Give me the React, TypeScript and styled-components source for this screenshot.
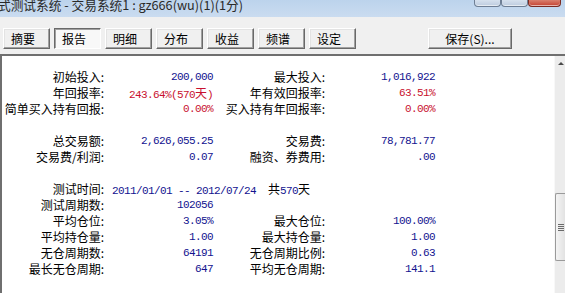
import React from 'react';
import styled, { createGlobalStyle } from 'styled-components';

const GlobalStyle = createGlobalStyle`
  html, body {
    margin: 0;
    padding: 0;
    background: #f0f0f0;
    overflow: hidden;
  }
`;

const Window = styled.div`
  width: 565px;
  height: 293px;
  display: flex;
  flex-direction: column;
  overflow: hidden;
  background: #f0f0f0;
  font-family: "Noto Sans CJK SC", "Liberation Sans", sans-serif;
`;

const TitleBar = styled.div`
  height: 17px;
  flex: none;
  display: flex;
  background: linear-gradient(#bcd3ec, #cadcf0);
  overflow: hidden;
`;

const TitleText = styled.div`
  margin: -1px 0 0 -2px;
  font-size: 12.7px;
  line-height: 12px;
  color: #2a2a2a;
  white-space: nowrap;
`;

const WinButtons = styled.div`
  margin-left: auto;
  margin-right: 4px;
  display: flex;
  align-self: flex-start;
`;

const WinButton = styled.div<{ $close?: boolean }>`
  width: ${(p) => (p.$close ? 33 : 27)}px;
  height: 7px;
  box-sizing: border-box;
  border: 1px solid ${(p) => (p.$close ? '#7a2a22' : '#6e7e94')};
  border-top: none;
  border-radius: 0 0 4px 4px;
  background: ${(p) =>
    p.$close ? 'linear-gradient(#d9806f, #c4402f)' : 'linear-gradient(#d6e1ee, #bccbde)'};
  box-shadow: inset 0 -1px rgba(255, 255, 255, 0.6);
`;

const Toolbar = styled.div`
  height: 37px;
  flex: none;
  box-sizing: border-box;
  padding: 11px 0 0 3px;
  display: flex;
  gap: 4px;
  align-items: flex-start;
`;

const ToolButton = styled.div<{ $pressed?: boolean; $wide?: boolean }>`
  width: ${(p) => (p.$wide ? 84 : 47)}px;
  height: 21px;
  box-sizing: border-box;
  font-size: 12px;
  line-height: 19px;
  color: #000;
  padding-left: ${(p) => (p.$wide ? 0 : 7)}px;
  text-align: ${(p) => (p.$wide ? 'center' : 'left')};
  white-space: nowrap;
  border: 1px solid;
  border-color: ${(p) => (p.$pressed ? '#696969 #ffffff #ffffff #696969' : '#ffffff #696969 #696969 #ffffff')};
  box-shadow: ${(p) =>
    p.$pressed ? 'inset 1px 1px #a0a0a0' : 'inset -1px -1px #a0a0a0, inset 1px 1px #e3e3e3'};
  background: ${(p) => (p.$pressed ? '#f8f8f8' : '#f0f0f0')};
  margin-left: ${(p) => (p.$wide ? 68 : 0)}px;
`;

const Panel = styled.div`
  flex: 1;
  display: flex;
  border-top: 2px solid #6f6f6f;
  border-left: 2px solid #6f6f6f;
  background: #fff;
  min-height: 0;
`;

const Content = styled.div`
  flex: 1;
  padding-top: 13px;
`;

const Report = styled.div`
  display: grid;
  grid-template-columns: 102px 109px 112px 110px;
  grid-auto-rows: 16px;
`;

const Label = styled.div`
  text-align: right;
  font-size: 12px;
  line-height: 16px;
  color: #000;
  white-space: nowrap;
`;

const Value = styled.div<{ $tone?: 'blue' | 'red' }>`
  text-align: right;
  font-family: "Liberation Mono", "Noto Sans CJK SC", monospace;
  font-size: 11px;
  letter-spacing: -0.6px;
  line-height: 16px;
  white-space: pre;
  color: ${(p) => (p.$tone === 'red' ? '#c8102e' : '#12128f')};
`;

const Cjk = styled.span<{ $black?: boolean }>`
  font-family: "Noto Sans CJK SC", sans-serif;
  font-size: 12px;
  letter-spacing: 0;
  color: ${(p) => (p.$black ? '#000' : 'inherit')};
`;

const WideValue = styled(Value)`
  grid-column: 2 / 5;
  text-align: left;
  padding-left: 8px;
`;

const Spacer = styled.div<{ $from?: number }>`
  grid-column: ${(p) => p.$from ?? 1} / 5;
`;

const Scrollbar = styled.div`
  width: 10px;
  flex: none;
  background: #ececec;
  border-left: 1px solid #f8f8f8;
  display: flex;
  flex-direction: column;
  align-items: center;
`;

const Arrow = styled.div`
  margin: 6px 0 0 2px;
  width: 0;
  height: 0;
  border-left: 3px solid transparent;
  border-right: 3px solid transparent;
  border-bottom: 3px solid #4a4a4a;
`;

const Thumb = styled.div`
  margin-top: 128px;
  align-self: stretch;
  height: 68px;
  box-sizing: border-box;
  border: 1px solid #9a9a9a;
  border-right: none;
  border-radius: 2px 0 0 2px;
  background: linear-gradient(90deg, #f4f4f4, #e2e2e2);
  display: flex;
  flex-direction: column;
  justify-content: center;
  gap: 1px;
  padding-left: 2px;
`;

const Grip = styled.div`
  width: 6px;
  height: 1px;
  background: #6a6a6a;
`;

type Tone = 'blue' | 'red';
type Pair = [string, React.ReactNode, Tone];

const rows: ([Pair, Pair] | null)[] = [
  [['初始投入', '200,000', 'blue'], ['最大投入', '1,016,922', 'blue']],
  [['年回报率', <>243.64%(570<Cjk>天</Cjk>)</>, 'red'], ['年有效回报率', '63.51%', 'red']],
  [['简单买入持有回报', '0.00%', 'red'], ['买入持有年回报率', '0.00%', 'red']],
  null,
  [['总交易额', '2,626,055.25', 'blue'], ['交易费', '78,781.77', 'blue']],
  [['交易费/利润', '0.07', 'blue'], ['融资、券费用', '.00', 'blue']],
  null,
];

// left and right halves of the position statistics block
const left: [string, string][] = [
  ['平均仓位', '3.05%'],
  ['平均持仓量', '1.00'],
  ['无仓周期数', '64191'],
  ['最长无仓周期', '647'],
];

const right: [string, string][] = [
  ['最大仓位', '100.00%'],
  ['最大持仓量', '1.00'],
  ['无仓周期比例', '0.63'],
  ['平均无仓周期', '141.1'],
];

const tabs = ['摘要', '报告', '明细', '分布', '收益', '频谱', '设定'];

export default function App() {
  return (
    <>
      <GlobalStyle />
      <Window>
        <TitleBar>
          <TitleText>式测试系统 - 交易系统1 : gz666(wu)(1)(1分)</TitleText>
          <WinButtons>
            <WinButton />
            <WinButton />
            <WinButton $close />
          </WinButtons>
        </TitleBar>
        <Toolbar>
          {tabs.map((t) => (
            <ToolButton key={t} $pressed={t === '报告'}>
              {t}
            </ToolButton>
          ))}
          <ToolButton $wide>保存(S)...</ToolButton>
        </Toolbar>
        <Panel>
          <Content>
            <Report>
              {rows.map((r, i) =>
                r ? (
                  <React.Fragment key={i}>
                    <Label>{r[0][0]}:</Label>
                    <Value $tone={r[0][2]}>{r[0][1]}</Value>
                    <Label>{r[1][0]}:</Label>
                    <Value $tone={r[1][2]}>{r[1][1]}</Value>
                  </React.Fragment>
                ) : (
                  <Spacer key={i} />
                )
              )}
              <Label>测试时间:</Label>
              <WideValue>
                {'2011/01/01 -- 2012/07/24  '}
                <Cjk $black>共</Cjk>570<Cjk $black>天</Cjk>
              </WideValue>
              <Label>测试周期数:</Label>
              <Value>102056</Value>
              <Spacer $from={3} />
              {left.map((l, i) => (
                <React.Fragment key={l[0]}>
                  <Label>{l[0]}:</Label>
                  <Value>{l[1]}</Value>
                  <Label>{right[i][0]}:</Label>
                  <Value>{right[i][1]}</Value>
                </React.Fragment>
              ))}
            </Report>
          </Content>
          <Scrollbar>
            <Arrow />
            <Thumb>
              <Grip />
              <Grip />
              <Grip />
              <Grip />
            </Thumb>
          </Scrollbar>
        </Panel>
      </Window>
    </>
  );
}
